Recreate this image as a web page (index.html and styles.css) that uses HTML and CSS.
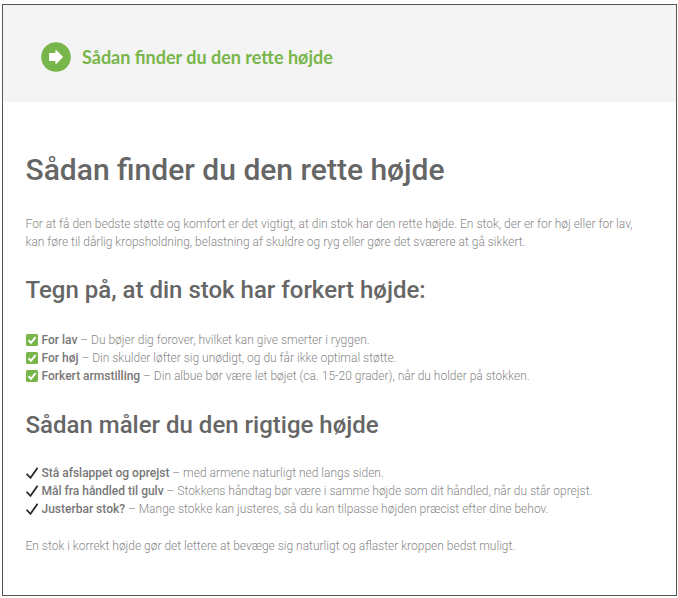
FILE: index.html
```html
<!DOCTYPE html>
<html lang="da">
<head>
<meta charset="utf-8">
<title>Sådan finder du den rette højde</title>
<link rel="stylesheet" href="styles.css">
</head>
<body>
<div class="frame">
  <header class="banner">
    <svg class="arrow-icon" viewBox="0 0 30 30" width="30" height="30"><circle cx="15" cy="15" r="14.8" fill="#78b64b"/><path d="M15 8.7 L21.3 15 L15 21.3 V18.5 H8.7 V11.5 H15 Z" fill="#fff" stroke="#fff" stroke-width="1.2" stroke-linejoin="round"/></svg>
    <span class="banner-title">Sådan finder du den rette højde</span>
  </header>
  <main class="content">
    <h1>Sådan finder du den rette højde</h1>
    <p class="intro">For at få den bedste støtte og komfort er det vigtigt, at din stok har den rette højde. En stok, der er for høj eller for lav, kan føre til dårlig kropsholdning, belastning af skuldre og ryg eller gøre det sværere at gå sikkert.</p>
    <h2 class="h-signs">Tegn på, at din stok har forkert højde:</h2>
    <ul class="list">
      <li><svg class="mark" viewBox="0 0 12 12" width="12" height="12"><rect width="12" height="12" rx="1.5" fill="#78b64b"/><path d="M2.5 6.3 L5 8.8 L9.6 3.2" fill="none" stroke="#fff" stroke-width="2"/></svg><b>For lav</b> – Du bøjer dig forover, hvilket kan give smerter i ryggen.</li>
      <li><svg class="mark" viewBox="0 0 12 12" width="12" height="12"><rect width="12" height="12" rx="1.5" fill="#78b64b"/><path d="M2.5 6.3 L5 8.8 L9.6 3.2" fill="none" stroke="#fff" stroke-width="2"/></svg><b>For høj</b> – Din skulder løfter sig unødigt, og du får ikke optimal støtte.</li>
      <li><svg class="mark" viewBox="0 0 12 12" width="12" height="12"><rect width="12" height="12" rx="1.5" fill="#78b64b"/><path d="M2.5 6.3 L5 8.8 L9.6 3.2" fill="none" stroke="#fff" stroke-width="2"/></svg><b>Forkert armstilling</b> – Din albue bør være let bøjet (ca. 15-20 grader), når du holder på stokken.</li>
    </ul>
    <h2 class="h-measure">Sådan måler du den rigtige højde</h2>
    <ul class="list list-second">
      <li><svg class="mark" viewBox="0 0 12 12" width="12" height="12"><path d="M0.5 6.8 L4.5 10.8 L11.6 0.8" fill="none" stroke="#2a2a2a" stroke-width="1.8"/></svg><b>Stå afslappet og oprejst</b> – med armene naturligt ned langs siden.</li>
      <li><svg class="mark" viewBox="0 0 12 12" width="12" height="12"><path d="M0.5 6.8 L4.5 10.8 L11.6 0.8" fill="none" stroke="#2a2a2a" stroke-width="1.8"/></svg><b>Mål fra håndled til gulv</b> – Stokkens håndtag bør være i samme højde som dit håndled, når du står oprejst.</li>
      <li><svg class="mark" viewBox="0 0 12 12" width="12" height="12"><path d="M0.5 6.8 L4.5 10.8 L11.6 0.8" fill="none" stroke="#2a2a2a" stroke-width="1.8"/></svg><b>Justerbar stok?</b> – Mange stokke kan justeres, så du kan tilpasse højden præcist efter dine behov.</li>
    </ul>
    <p class="outro">En stok i korrekt højde gør det lettere at bevæge sig naturligt og aflaster kroppen bedst muligt.</p>
  </main>
</div>
</body>
</html>
```
FILE: styles.css
```css
html, body { margin: 0; padding: 0; background: #fff; }
body { padding: 4px 1px 2px 2px; font-family: "Roboto", sans-serif; }
.frame {
  width: 675px;
  height: 592px;
  box-sizing: border-box;
  border: 1px solid #555;
  overflow: hidden;
}
.banner {
  height: 97px;
  background: #f4f4f4;
  display: flex;
  align-items: center;
  padding: 6px 0 0 38px;
  box-sizing: border-box;
  gap: 11px;
}
.banner-title {
  font-family: "Lato", sans-serif;
  font-weight: 700;
  font-size: 18px;
  color: #78b64b;
}
.content { padding: 0 22.5px; }
h1 {
  margin: 48px 0 0;
  font-size: 30px;
  line-height: 40px;
  font-weight: 500;
  color: #666;
}
.intro, .outro, .list {
  font-size: 12px;
  line-height: 18px;
  font-weight: 300;
  color: #888;
}
.intro { margin: 25px 0 0; }
h2 {
  font-size: 24px;
  line-height: 32px;
  font-weight: 500;
  color: #666;
  margin: 0;
}
.h-signs { margin-top: 23px; }
.h-measure { margin-top: 24px; }
.list { list-style: none; margin: 25px 0 0; padding: 0; }
.list-second { margin-top: 23px; }
.list li { display: block; white-space: nowrap; }
.list b { font-weight: 500; color: #777; }
.mark { vertical-align: -2px; margin-right: 4px; }
.outro { margin: 19px 0 0; }
```
